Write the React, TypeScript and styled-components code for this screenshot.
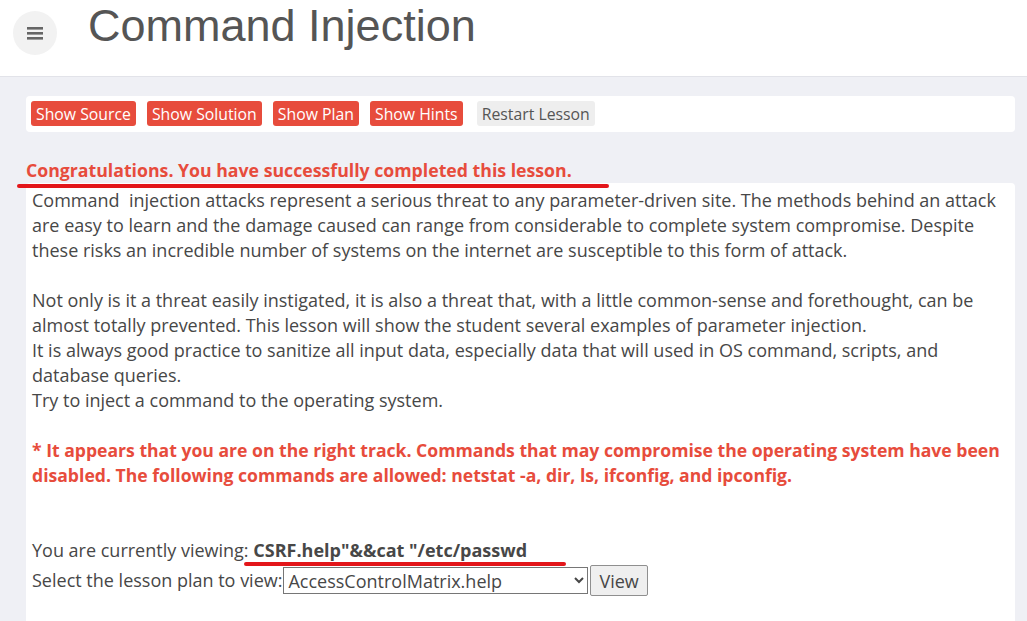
import { type FC } from "react";
import styled, { createGlobalStyle } from "styled-components";

const GlobalStyle = createGlobalStyle`
  html, body {
    margin: 0;
    padding: 0;
    background: #eff0f5;
  }
  body {
    font-family: "Open Sans", "Noto Sans", sans-serif;
    color: #474747;
  }
`;

const Header = styled.header`
  background: #fff;
  height: 76px;
  border-bottom: 1px solid #e2e3e9;
  display: flex;
  align-items: flex-start;
  padding-left: 13px;
`;

const MenuButton = styled.button`
  margin-top: 11px;
  width: 44px;
  height: 44px;
  border: none;
  border-radius: 50%;
  background: #f2f2f2;
  display: flex;
  align-items: center;
  justify-content: center;
  padding: 0;
`;

const Title = styled.h1`
  margin: 0 0 0 31px;
  font-family: "Liberation Sans", Arial, sans-serif;
  font-weight: 400;
  font-size: 45px;
  color: #555;
  line-height: normal;
`;

const Main = styled.main`
  padding: 19px 12px 0 26px;
`;

const Toolbar = styled.div`
  background: #fff;
  border-radius: 4px;
  height: 36px;
  padding: 5px;
  box-sizing: border-box;
  display: flex;
  gap: 11px;
`;

const ToolButton = styled.button<{ $muted?: boolean }>`
  height: 25px;
  padding: 0 5px;
  border: none;
  border-radius: 3px;
  font-family: "Open Sans", sans-serif;
  font-size: 15.8px;
  background: ${({ $muted }) => ($muted ? "#eeeeee" : "#e74c3c")};
  color: ${({ $muted }) => ($muted ? "#555" : "#fff")};
  margin-left: ${({ $muted }) => ($muted ? "3px" : "0")};
`;

const Congrats = styled.div`
  position: relative;
  margin-top: 26px;
  font-size: 17.7px;
  font-weight: 700;
  line-height: 25px;
  color: #e74c3c;
  &::after {
    content: "";
    position: absolute;
    left: -9px;
    top: 26px;
    width: 592px;
    height: 4px;
    border-radius: 2px;
    background: #e3161a;
  }
`;

const Panel = styled.section`
  background: #fff;
  border-radius: 4px;
  padding: 5px 6px 30px;
  font-size: 18px;
  line-height: 25px;
  min-height: 500px;
`;

const Para = styled.p<{ $gap?: number }>`
  margin: 0 0 ${({ $gap }) => $gap ?? 25}px;
`;

const Warning = styled.p`
  margin: 0 0 50px;
  font-size: 17.6px;
  font-weight: 700;
  color: #e74c3c;
`;

const ViewRow = styled.div`
  line-height: 25px;
`;

const FileName = styled.b`
  position: relative;
  &::after {
    content: "";
    position: absolute;
    left: -9px;
    top: 24px;
    width: 322px;
    height: 4px;
    border-radius: 2px;
    background: #e3161a;
  }
`;

const PlanForm = styled.form`
  display: flex;
  align-items: center;
  margin-top: 2px;
`;

const Select = styled.select`
  width: 305px;
  height: 27px;
  font-family: "Open Sans", sans-serif;
  font-size: 18px;
  color: #474747;
  border: 1px solid #767676;
  border-radius: 0;
  background: #fff;
  margin-left: 1px;
`;

const ViewButton = styled.button`
  height: 31px;
  padding: 0 8px;
  margin-left: 2px;
  font-family: "Open Sans", sans-serif;
  font-size: 18px;
  color: #474747;
  background: #efefef;
  border: 1px solid #8f8f8f;
  border-radius: 2px;
`;

const MenuIcon: FC = () => (
  <svg width="16" height="14" viewBox="0 0 16 14">
    <rect x="0" y="1" width="16" height="2.6" fill="#666" />
    <rect x="0" y="6" width="16" height="2.6" fill="#666" />
    <rect x="0" y="11" width="16" height="2.6" fill="#666" />
  </svg>
);

const App: FC = () => {
  return (
    <>
      <GlobalStyle />
      <Header>
        <MenuButton aria-label="menu">
          <MenuIcon />
        </MenuButton>
        <Title>Command Injection</Title>
      </Header>
      <Main>
        <Toolbar>
          <ToolButton>Show Source</ToolButton>
          <ToolButton>Show Solution</ToolButton>
          <ToolButton>Show Plan</ToolButton>
          <ToolButton>Show Hints</ToolButton>
          <ToolButton $muted>Restart Lesson</ToolButton>
        </Toolbar>
        <Congrats>Congratulations. You have successfully completed this lesson.</Congrats>
        <Panel>
          <Para>
            Command&nbsp; injection attacks represent a serious threat to any parameter-driven
            site. The methods behind an attack are easy to learn and the damage caused can range
            from considerable to complete system compromise. Despite these risks an incredible
            number of systems on the internet are susceptible to this form of attack.
          </Para>
          <Para $gap={0}>
            Not only is it a threat easily instigated, it is also a threat that, with a little
            common-sense and forethought, can be almost totally prevented. This lesson will show
            the student several examples of parameter injection.
          </Para>
          <Para $gap={0}>
            It is always good practice to sanitize all input data, especially data that will used
            in OS command, scripts, and database queries.
          </Para>
          <Para>Try to inject a command to the operating system.</Para>
          <Warning>
            * It appears that you are on the right track. Commands that may compromise the
            operating system have been disabled. The following commands are allowed: netstat -a,
            dir, ls, ifconfig, and ipconfig.
          </Warning>
          <ViewRow>
            You are currently viewing: <FileName>CSRF.help"&amp;&amp;cat "/etc/passwd</FileName>
          </ViewRow>
          <PlanForm onSubmit={(e) => e.preventDefault()}>
            Select the lesson plan to view:
            <Select defaultValue="AccessControlMatrix.help">
              <option>AccessControlMatrix.help</option>
            </Select>
            <ViewButton type="submit">View</ViewButton>
          </PlanForm>
        </Panel>
      </Main>
    </>
  );
};

export default App;
